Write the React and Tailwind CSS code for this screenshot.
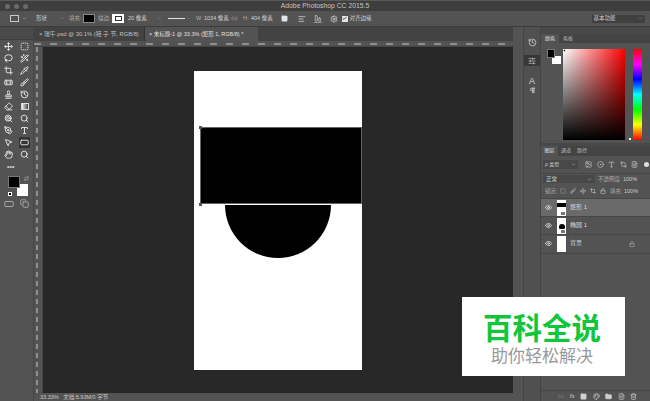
import {
  Move, SquareDashed, Lasso, Wand2, Crop, Pipette, Bandage, Brush, Stamp, History, Eraser,
  Square, Lollipop, Search, PenTool, Type, MousePointer2, Hand, Eye, Lock, Link2, Palette,
  Folder, Trash2, FileText, Image, CircleDot, Settings, Check, ChevronDown, Copy,
  AlignLeft, AlignEndHorizontal, Pilcrow, SlidersHorizontal, RectangleHorizontal, Repeat,
} from "lucide-react";

const cjk = "font-['Liberation_Sans','Noto_Sans_CJK_SC',sans-serif]";

const tools = [
  [Move, SquareDashed],
  [Lasso, Wand2],
  [Crop, Pipette],
  [Bandage, Brush],
  [Stamp, History],
  [Eraser, "gradient"],
  [Lollipop, Search],
  [PenTool, Type],
  [MousePointer2, RectangleHorizontal],
  [Hand, Search],
];

const ToolIcon = ({ icon: Icon }) => {
  if (Icon === "gradient") {
    return <div className="w-[8px] h-[7px] border border-[#dcdcdc] bg-[linear-gradient(to_right,#eee,#444)]" />;
  }
  return <Icon size={9} strokeWidth={2.6} className="text-[#dedede]" />;
};

const Layer = ({ name, selected, thumb, locked }) => (
  <div
    className={
      selected
        ? "h-[18.2px] flex items-center bg-[#6a6a6a] border-b border-[#474747]"
        : "h-[18.2px] flex items-center border-b border-[#474747]"
    }
  >
    <Eye size={7} strokeWidth={2.5} className="ml-[4px] text-[#e4e4e4]" />
    <div className="relative ml-[5px] w-[9px] h-[16px] bg-white overflow-hidden flex flex-col items-center">
      {thumb === "rect" && <div className="mt-[3px] w-full h-[4px] bg-black" />}
      {thumb === "circle" && <div className="mt-[6px] w-[6px] h-[6px] rounded-full bg-black" />}
      {thumb && <div className="absolute right-0 bottom-0 w-[6px] h-[5px] bg-[#777] border border-white" />}
    </div>
    <span className="ml-[4px] text-[6px] text-[#d5d5d5]">{name}</span>
    {locked && <Lock size={6} className="ml-auto mr-[15px] text-[#bdbdbd]" />}
  </div>
);

export default function App() {
  return (
    <div className={`relative w-[650px] h-[401px] overflow-hidden flex flex-col bg-[#535353] ${cjk}`}>
      {/* title bar */}
      <div className="h-[11px] relative flex items-center justify-center bg-[#3e3e3e] border-t border-[#5a5a5a]">
        <div className="absolute left-[5px] top-[3px] flex gap-[4px]">
          <div className="w-[5px] h-[5px] rounded-full bg-[#6a6a6a]" />
          <div className="w-[5px] h-[5px] rounded-full bg-[#6a6a6a]" />
          <div className="w-[5px] h-[5px] rounded-full bg-[#6a6a6a]" />
        </div>
        <span className="text-[6.8px] leading-none text-[#c4c4c4]">Adobe Photoshop CC 2015.5</span>
      </div>

      {/* options bar */}
      <div className="h-[16px] flex items-center bg-[#535353] border-b border-[#3c3c3c] text-[5.5px] leading-none text-[#d0d0d0]">
        <div className="ml-[10px] w-[9px] h-[7px] border border-[#c8c8c8]" />
        <ChevronDown size={5} className="ml-[3px]" />
        <span className="ml-[9px] w-[27px]">形状</span>
        <ChevronDown size={5} className="-ml-[3px] text-[#999]" />
        <span className="ml-[4px] w-[14px] text-[#aaa]">填充:</span>
        <div className="w-[12px] h-[9px] bg-black border border-[#888]" />
        <span className="ml-[3px] w-[14px] text-[#aaa]">描边:</span>
        <div className="w-[12px] h-[9px] bg-white flex items-center justify-center">
          <div className="w-[7px] h-[5px] border border-[#333]" />
        </div>
        <span className="ml-[4px] w-[29px]">20 像素</span>
        <ChevronDown size={5} className="text-[#999]" />
        <div className="ml-[6px] w-[17px] h-px bg-[#e5e5e5]" />
        <ChevronDown size={5} className="ml-px text-[#999]" />
        <span className="ml-[5px] w-[8px] text-[#aaa]">W:</span>
        <span className="w-[27px]">1034 像素</span>
        <Link2 size={7} className="text-[#999]" />
        <span className="ml-[5px] w-[8px] text-[#aaa]">H:</span>
        <span className="w-[30px]">404 像素</span>
        <Square size={7} fill="#e5e5e5" className="text-[#e5e5e5]" />
        <AlignLeft size={8} className="ml-[9.5px] text-[#e5e5e5]" />
        <AlignEndHorizontal size={8} className="ml-[8px] text-[#d5d5d5]" />
        <Settings size={8} className="ml-[8px] text-[#e5e5e5]" />
        <div className="ml-[4px] w-[6px] h-[6px] bg-[#e5e5e5] flex items-center justify-center">
          <Check size={5} strokeWidth={4} className="text-[#333]" />
        </div>
        <span className="ml-[2px] w-[242px]">对齐边缘</span>
        <div className="w-[53px] h-[8px] bg-[#404040] flex items-center justify-between px-[2px]">
          <span>基本功能</span>
          <ChevronDown size={5} className="text-[#999]" />
        </div>
      </div>

      <div className="flex-1 flex min-h-0">
        {/* toolbar */}
        <div className="w-[34px] shrink-0 flex flex-col items-center bg-[#535353] border-r border-[#444]">
          <div className="w-full h-[13px] bg-[#4a4a4a] border-b border-[#3f3f3f]" />
          <div className="flex flex-col">
            {tools.map((row, i) => (
              <div key={i} className="h-[12.1px] flex items-center gap-[5px]">
                {row.map((icon, j) => (
                  <div
                    key={j}
                    className={
                      i === 8 && j === 1
                        ? "w-[11px] h-[11px] flex items-center justify-center bg-[#333]"
                        : "w-[11px] h-[11px] flex items-center justify-center"
                    }
                  >
                    <ToolIcon icon={icon} />
                  </div>
                ))}
              </div>
            ))}
          </div>
          <div className="mt-[2px] w-full pl-[7px] text-[7px] leading-[8px] font-bold text-[#ccc]">•••</div>
          <div className="mt-[5px] w-full pl-[8px]">
            <div className="relative w-[20px] h-[20px]">
              <div className="absolute right-0 bottom-0 w-[11px] h-[12px] bg-white" />
              <div className="absolute left-0 top-0 w-[12px] h-[12px] bg-black border border-[#777]" />
              <Repeat size={5} className="absolute -right-[1px] top-0 text-[#ccc]" />
              <div className="absolute left-0 bottom-0 w-[4px] h-[4px] bg-black border border-white" />
            </div>
          </div>
          <div className="mt-[3px] flex gap-[6px]">
            <RectangleHorizontal size={10} className="text-[#b8b8b8]" />
            <Copy size={9} className="text-[#b8b8b8]" />
          </div>
        </div>

        {/* document area */}
        <div className="w-[479px] shrink-0 flex flex-col">
          <div className="h-[14px] flex items-stretch bg-[#424242] text-[5.5px] text-[#c0c0c0]">
            <div className="w-[111px] flex items-center pl-[5px] border-r border-[#333] text-[5.8px]">
              × 瑞午.psd @ 30.1% (鞋 子 节, RGB/8)
            </div>
            <div className="w-[113px] flex items-center pl-[4px] bg-[#535353] text-[#e0e0e0]">
              × 未标题-1 @ 33.3% (矩形 1, RGB/8) *
            </div>
          </div>
          <div className="h-[6px] bg-[repeating-linear-gradient(to_right,#8f8f8f_0,#8f8f8f_7px,transparent_7px,transparent_16px)] bg-[length:100%_2px] bg-no-repeat bg-left border-b border-[#444]" />
          <div className="flex-1 flex min-h-0">
            <div className="w-[9px] bg-[repeating-linear-gradient(to_bottom,#8f8f8f_0,#8f8f8f_5px,transparent_5px,transparent_9px)] bg-[length:2px_100%] bg-no-repeat bg-[position:2px_0] border-r border-[#444]" />
            <div className="w-[470px] bg-[#282828] pt-[24px] pl-[151px]">
              <div className="relative w-[168px] h-[299px] bg-white">
                <div className="absolute left-[31px] top-[134px] w-[106px] h-[53px] rounded-b-full bg-black" />
                <div className="absolute left-[6px] top-[56px] w-[162px] h-[77px] bg-black border border-[#666]" />
                <div className="absolute left-[5px] top-[55px] w-[3px] h-[3px] bg-[#555]" />
                <div className="absolute left-[5px] top-[132px] w-[3px] h-[3px] bg-[#555]" />
              </div>
            </div>
          </div>
          <div className="h-[8px] bg-[#535353] pl-[6px] text-[5.5px] leading-[8px] text-[#c8c8c8]">
            33.33% &nbsp; 文档:5.93M/0 字节
          </div>
        </div>

        {/* icon dock */}
        <div className="w-[10px] shrink-0 bg-[#535353]" />
        <div className="w-[18px] shrink-0 flex flex-col items-center pt-[11px] bg-[#505050] border-x border-[#444] text-[#d5d5d5]">
          <History size={9} />
          <div className="mt-[8px] w-full h-[11px] flex items-center justify-center bg-[#383838]">
            <SlidersHorizontal size={8} />
          </div>
          <div className="mt-[10px] flex flex-col items-center">
            <span className="text-[9px] leading-[11px]">A</span>
            <Pilcrow size={7} strokeWidth={3} />
          </div>
        </div>

        {/* panels */}
        <div className="w-[109px] shrink-0 flex flex-col bg-[#535353]">
          <div className="h-[7px] bg-[#484848]" />
          <div className="h-[9px] flex items-stretch bg-[#444] text-[5px] text-[#bbb]">
            <div className="w-[18px] flex items-center justify-center bg-[#535353] text-[#e0e0e0]">颜色</div>
            <div className="w-[18px] flex items-center justify-center">色板</div>
          </div>
          <div className="h-[100px] flex pt-[6px] pl-[6px]">
            <div className="relative w-[14px] h-[15px]">
              <div className="absolute right-0 bottom-0 w-[9px] h-[8px] bg-white" />
              <div className="absolute left-0 top-0 w-[8px] h-[9px] bg-black border border-[#777]" />
            </div>
            <div className="relative ml-[2px] w-[62px] h-[91px] bg-[linear-gradient(to_top,#000,transparent),linear-gradient(to_right,#fff,#f00)]">
              <div className="absolute left-0 top-0 w-[3px] h-[3px] rounded-full border border-[#ddd] bg-black" />
            </div>
            <div className="relative ml-[8px] w-[9px] h-[91px] bg-[linear-gradient(to_bottom,#f00,#f0f,#00f,#0ff,#0f0,#ff0,#f00)]">
              <div className="absolute -left-[4px] bottom-0 w-[2px] h-[2px] bg-white" />
            </div>
          </div>
          <div className="h-[3px] bg-[#484848]" />
          <div className="h-[10px] flex items-stretch bg-[#444] text-[5px] text-[#bbb]">
            <div className="w-[17px] flex items-center justify-center bg-[#535353] text-[#e0e0e0]">图层</div>
            <div className="w-[16px] flex items-center justify-center">通道</div>
            <div className="w-[16px] flex items-center justify-center">路径</div>
          </div>
          <div className="h-[18px] flex items-center border-b border-[#474747] text-[5px] text-[#cfcfcf]">
            <div className="ml-[2px] w-[35px] h-[9px] flex items-center justify-between px-[2px] bg-[#484848]">
              <span>ρ 类型</span>
              <ChevronDown size={5} />
            </div>
            <div className="ml-[7px] flex gap-[4.5px]">
              <Image size={7} />
              <CircleDot size={7} />
              <Type size={7} />
              <Crop size={7} />
              <FileText size={7} />
            </div>
            <div className="ml-[6px] w-[5px] h-[5px] rounded-full bg-[#ddd]" />
          </div>
          <div className="h-[10px] flex items-center text-[5.5px] text-[#cfcfcf]">
            <div className="ml-[2px] w-[52px] h-[8px] flex items-center justify-between px-[3px] bg-[#484848]">
              <span>正常</span>
              <ChevronDown size={5} />
            </div>
            <span className="ml-[3px] w-[25px] text-[#aaa]">不透明度:</span>
            <span>100%</span>
          </div>
          <div className="h-[15px] flex items-center border-b border-[#474747] text-[5.5px] text-[#cfcfcf]">
            <span className="ml-[4px] w-[15px] text-[#aaa]">锁定:</span>
            <div className="flex gap-[4px] items-center">
              <Square size={6} className="text-[#999]" />
              <Brush size={6} />
              <Move size={6} />
              <Crop size={6} />
              <Lock size={6} />
            </div>
            <span className="ml-[4px] w-[14px] text-[#aaa]">填充:</span>
            <span>100%</span>
          </div>
          <Layer name="矩形 1" selected thumb="rect" />
          <Layer name="椭圆 1" thumb="circle" />
          <Layer name="背景" locked />
          <div className="flex-1" />
          <div className="h-[11px] flex items-center justify-end gap-[5.5px] pr-[13px] border-t border-[#474747] text-[#d0d0d0]">
            <Link2 size={7} className="text-[#777]" />
            <span className="text-[6px] leading-none italic">fx</span>
            <Square size={7} fill="#d0d0d0" />
            <Palette size={7} />
            <Folder size={7} fill="#d0d0d0" />
            <FileText size={7} />
            <Trash2 size={7} />
          </div>
        </div>
      </div>

      {/* watermark */}
      <div className="absolute left-[462px] top-[297px] w-[163px] h-[79px] bg-white flex flex-col items-center pt-[15px] pr-[3px]">
        <div className="text-[29.5px] leading-[33px] font-bold text-[#0fc63c]">百科全说</div>
        <div className="mt-px text-[17px] leading-[21px] text-[#999]">助你轻松解决</div>
      </div>
    </div>
  );
}
